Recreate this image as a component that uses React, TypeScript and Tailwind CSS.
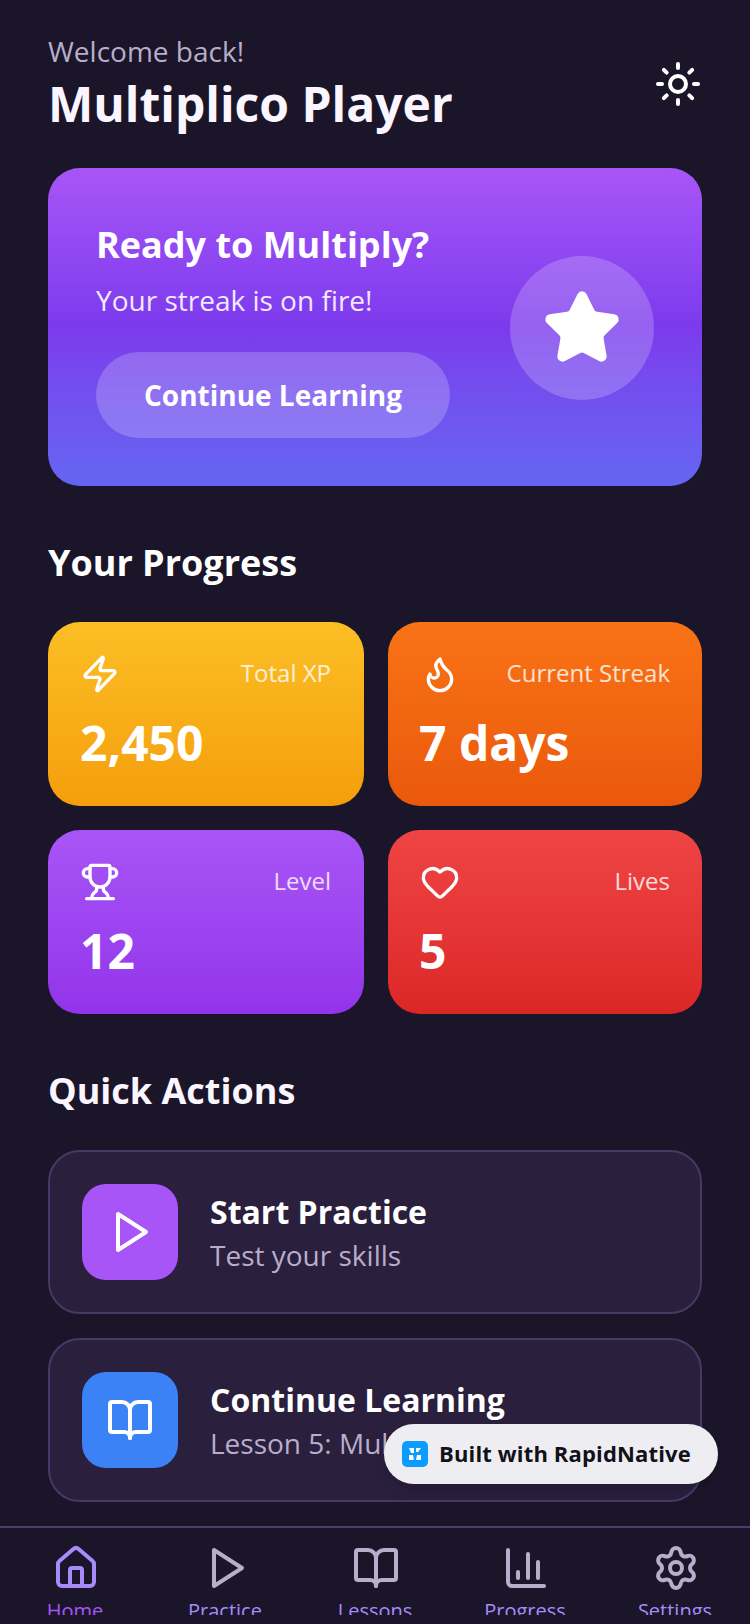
import { BookOpen, ChartColumn, Flame, Heart, House, Settings, Star, Sun, Trophy, Zap } from "lucide-react";
import type { ReactNode } from "react";

const PlayIcon = ({ className }: { className?: string }) => (
  <svg viewBox="0 0 24 24" fill="none" stroke="currentColor" strokeWidth={2} strokeLinecap="round" strokeLinejoin="round" className={className}>
    <polygon points="6 3 20 12 6 21 6 3" />
  </svg>
);

const stats = [
  { label: "Total XP", value: "2,450", icon: <Zap size={40} />, bg: "from-[#fbbf24] to-[#f59e0b] pr-[33px]", num: "" },
  { label: "Current Streak", value: "7 days", icon: <Flame size={40} />, bg: "from-[#f97316] to-[#ea580c]", num: "-ml-px" },
  { label: "Level", value: "12", icon: <Trophy size={40} />, bg: "from-[#a855f7] to-[#9333ea] pr-[33px]", num: "" },
  { label: "Lives", value: "5", icon: <Heart size={40} />, bg: "from-[#ef4444] to-[#dc2626]", num: "-ml-px" },
];

const nav: { label: string; icon: ReactNode; active?: boolean }[] = [
  { label: "Home", icon: <House size={48} />, active: true },
  { label: "Practice", icon: <PlayIcon className="size-12" /> },
  { label: "Lessons", icon: <BookOpen size={48} /> },
  { label: "Progress", icon: <ChartColumn size={48} /> },
  { label: "Settings", icon: <Settings size={48} /> },
];

function ActionCard({ title, sub, icon, bg }: { title: string; sub: string; icon: ReactNode; bg: string }) {
  return (
    <div className="flex h-[164px] items-center gap-8 rounded-[32px] border-2 border-[#453a66] bg-[#2a1f3d] px-8">
      <div className={`flex size-24 items-center justify-center rounded-3xl text-white ${bg}`}>{icon}</div>
      <div>
        <div className="text-[32px] leading-[44px] font-bold text-white">{title}</div>
        <div className="mt-px text-[28px] leading-[40px] text-[#b8aecb]">{sub}</div>
      </div>
    </div>
  );
}

export default function App() {
  return (
    <div className="relative flex h-[1624px] w-[750px] flex-col overflow-hidden bg-[#1a1528] font-['Open_Sans',sans-serif]">
      <main className="flex h-[1526px] flex-col overflow-hidden px-12 pt-[31px]">
        <header className="flex items-center justify-between">
          <div>
            <div className="text-[28px] leading-[40px] text-[#b8aecb]">Welcome back!</div>
            <h1 className="text-[48px] leading-[65px] font-bold text-[#faf5ff]">Multiplico Player</h1>
          </div>
          <Sun size={48} className="text-white" />
        </header>

        <section className="mt-8 flex h-[318px] items-start justify-between rounded-[32px] bg-gradient-to-b from-[#a855f7] via-[#7c3aed] to-[#6366f1] px-12 pt-[53px]">
          <div>
            <div className="text-[36px] leading-[48px] font-bold text-white">Ready to Multiply?</div>
            <div className="mt-[11px] text-[28px] leading-[40px] text-[#f3e8ff]">Your streak is on fire!</div>
            <div className="mt-8 flex h-[86px] w-[354px] items-center justify-center rounded-full bg-white/20 text-[28px] font-bold text-white">
              Continue Learning
            </div>
          </div>
          <div className="mt-[35px] flex size-36 items-center justify-center rounded-full bg-white/20">
            <Star size={80} fill="#ffffff" className="text-white" />
          </div>
        </section>

        <h2 className="mt-[51px] text-[36px] leading-[52px] font-bold text-white">Your Progress</h2>
        <div className="mt-[33px] grid grid-cols-[316px_314px] gap-6">
          {stats.map((s) => (
            <div key={s.label} className={`h-[184px] rounded-[32px] bg-gradient-to-b p-8 ${s.bg}`}>
              <div className="flex items-center justify-between text-white">
                {s.icon}
                <span className="-mt-0.5 text-[24px] text-white/80">{s.label}</span>
              </div>
              <div className={`mt-[21px] text-[48px] leading-[56px] font-bold text-white ${s.num}`}>{s.value}</div>
            </div>
          ))}
        </div>

        <h2 className="mt-[51px] text-[36px] leading-[52px] font-bold text-[#faf5ff]">Quick Actions</h2>
        <div className="mt-[33px] flex flex-col gap-6">
          <ActionCard title="Start Practice" sub="Test your skills" bg="bg-[#a855f7]" icon={<PlayIcon className="size-12" />} />
          <ActionCard title="Continue Learning" sub="Lesson 5: Multiplication" bg="bg-[#3b82f6]" icon={<BookOpen size={48} />} />
        </div>
      </main>

      <nav className="flex h-[89px] items-start justify-between overflow-hidden border-t-2 border-[#4a3f6b] pt-4 pr-[28px] pl-[30px]">
        {nav.map((n) => (
          <div key={n.label} className="flex w-[92px] flex-col items-center">
            <span className={n.active ? "text-[#a78bfa]" : "text-[#b8aecb]"}>{n.icon}</span>
            <span className={`mt-[5px] mr-[2px] text-[20px] leading-[28px] ${n.active ? "text-[#a855f7]" : "text-[#a78bfa]"}`}>{n.label}</span>
          </div>
        ))}
      </nav>

      <div className="absolute top-[1424px] left-[384px] flex h-[60px] w-[334px] items-center gap-[11px] rounded-full bg-[#eeeef2] pl-[18px] shadow-lg">
        <svg viewBox="0 0 26 26" className="size-[26px]">
          <rect width="26" height="26" rx="5" fill="#0a9dff" />
          <path d="M7 7h5v5H9zM14 7h5l-3 4h-2zM7 14h4l1 5H7zM15 14h4v5h-5z" fill="#fff" />
        </svg>
        <span className="-mt-px text-[22px] font-bold tracking-[0.15px] text-[#111118]">Built with RapidNative</span>
      </div>
    </div>
  );
}
